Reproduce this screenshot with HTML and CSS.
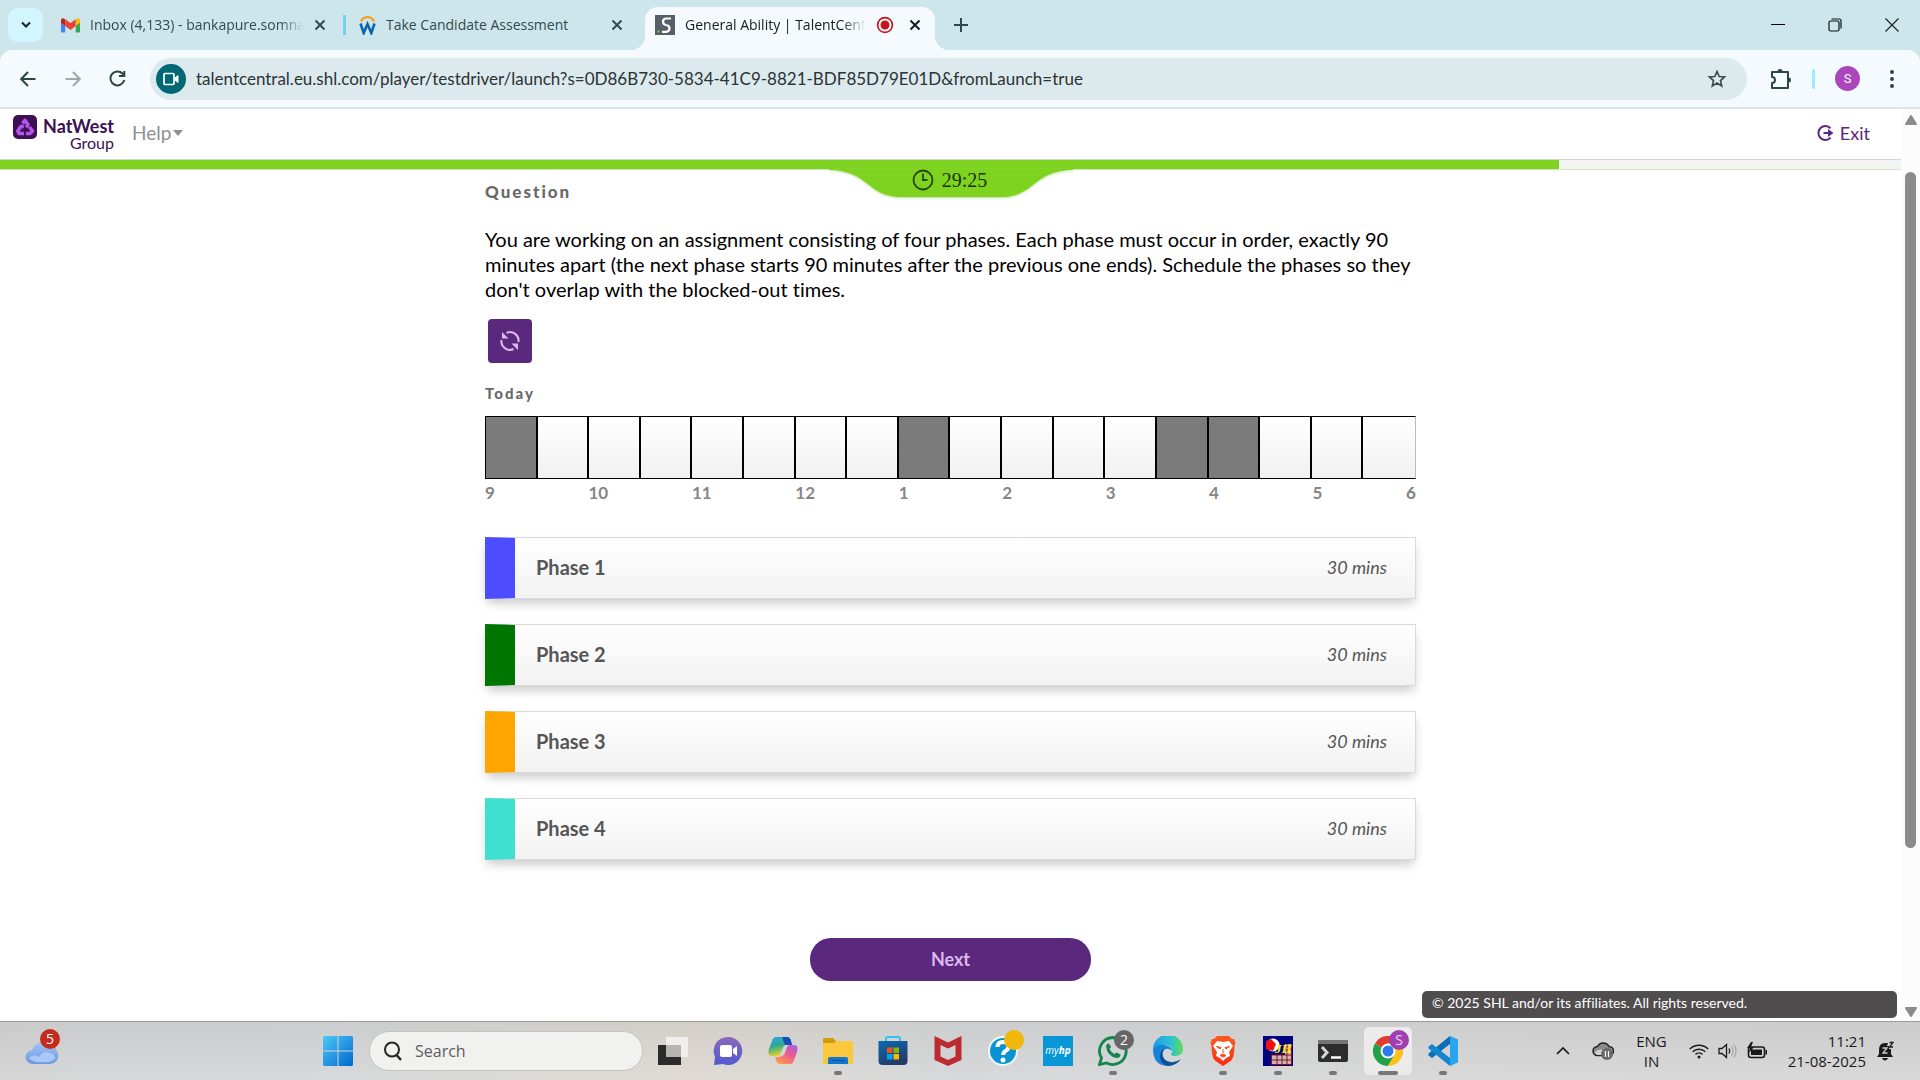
FILE: index.html
```html
<!DOCTYPE html>
<html lang="en">
<head>
<meta charset="utf-8">
<meta name="viewport" content="width=device-width, initial-scale=1">
<title>General Ability | TalentCentral</title>
<link rel="stylesheet" href="styles.css">
</head>
<body>
<div class="desktop">

  <header class="browser">
    <div class="tabstrip">
      <button class="tab-search" aria-label="Search tabs">
        <svg width="12" height="8" viewBox="0 0 12 8" fill="none" stroke="#1b1f20" stroke-width="2"><path d="M2 1.500L6 5.500L10 1.500"/></svg>
      </button>
      <div class="tab tab-mail">
        <svg width="19" height="15" viewBox="0 0 19 15"><path d="M0 2v11.500q0 1 1 1h3.300V6z" fill="#4285f4"/><path d="M19 2v11.500q0 1-1 1h-3.300V6z" fill="#34a853"/><path d="M14.700 1.200L17 .2q2 0 2 2v2.500l-4.300 3.300z" fill="#fbbc04"/><path d="M4.300 1.200L2 .2q-2 0-2 2v2.500l4.300 3.300z" fill="#c5221f"/><path d="M4.300 1.200L9.500 5l5.200-3.800V8L9.500 12 4.300 8z" fill="#ea4335"/></svg>
        <span class="tab-title">Inbox (4,133) - bankapure.somnath</span>
        <button class="tab-close" aria-label="Close tab"><svg width="12" height="12" viewBox="0 0 12 12" stroke="currentColor" stroke-width="2"><path d="M1.500 1.500l9 9M10.500 1.500l-9 9"/></svg></button>
      </div>
      <div class="tab tab-candidate">
        <svg width="17" height="20" viewBox="0 0 17 20" fill="none"><path d="M2 6.500a7 7 0 0 1 13 0" stroke="#f5a31b" stroke-width="2.200"/><path d="M1.500 8.500l3.200 9.500 3.800-9 3.800 9 3.200-9.500" stroke="#0d66ac" stroke-width="2.600"/></svg>
        <span class="tab-title">Take Candidate Assessment</span>
        <button class="tab-close" aria-label="Close tab"><svg width="12" height="12" viewBox="0 0 12 12" stroke="currentColor" stroke-width="2"><path d="M1.500 1.500l9 9M10.500 1.500l-9 9"/></svg></button>
      </div>
      <div class="tab tab-active">
        <svg width="20" height="20" viewBox="0 0 20 20"><path d="M0 0h20v20H0z" fill="#566068"/><path d="M16 3.500h-4.500q-3.500 0-3.500 3t3 3.500q3.500.5 3.500 3.500t-3.500 3.300H7" fill="none" stroke="#fff" stroke-width="2.200"/><path d="M2.500 15.500h2v2h-2z" fill="#7ed321"/></svg>
        <span class="tab-title">General Ability | TalentCentral</span>
        <svg width="18" height="18" viewBox="0 0 18 18"><circle cx="9" cy="9" r="7.400" fill="none" stroke="#c5161d" stroke-width="1.700"/><circle cx="9" cy="9" r="4.500" fill="#c5161d"/></svg>
        <button class="tab-close" aria-label="Close tab"><svg width="12" height="12" viewBox="0 0 12 12" stroke="currentColor" stroke-width="2"><path d="M1.500 1.500l9 9M10.500 1.500l-9 9"/></svg></button>
      </div>
      <button class="tab-new" aria-label="New tab"><svg width="14" height="14" viewBox="0 0 14 14" stroke="#33474a" stroke-width="2"><path d="M7 0v14M0 7h14"/></svg></button>
      <div class="window-controls">
        <button aria-label="Minimize"><svg width="14" height="14" viewBox="0 0 14 14" stroke="#000"><path d="M0 6.500h14"/></svg></button>
        <button aria-label="Restore"><svg width="14" height="14" viewBox="0 0 14 14" stroke="#111" fill="none" stroke-width="1.200"><rect x="1" y="3" width="10" height="10" rx="1.500"/><path d="M3.500 1h7.500q2 0 2 2v7.500"/></svg></button>
        <button aria-label="Close window"><svg width="14" height="14" viewBox="0 0 14 14" stroke="#222" stroke-width="1.200"><path d="M.5.5l13 13M13.500.5l-13 13"/></svg></button>
      </div>
    </div>

    <div class="toolbar">
      <nav class="nav-buttons">
        <button aria-label="Back"><svg width="16" height="16" viewBox="0 0 16 16" fill="none" stroke="#2f4548" stroke-width="2"><path d="M15.500 8H1.500M8 1L1.200 8 8 15"/></svg></button>
        <button aria-label="Forward"><svg width="16" height="16" viewBox="0 0 16 16" fill="none" stroke="#9caaad" stroke-width="2"><path d="M.5 8h14M8 1l6.800 7L8 15"/></svg></button>
        <button aria-label="Reload"><svg width="17" height="17" viewBox="0 0 17 17" fill="none" stroke="#2f4548" stroke-width="2"><path d="M15.300 10A7 7 0 1 1 13.500 3.500l1.500 1.500M15.300 1v5H10"/></svg></button>
      </nav>
      <form class="omnibox">
        <button type="button" class="site-info" aria-label="Camera in use"><svg width="16" height="14" viewBox="0 0 16 14" fill="none" stroke="#fff" stroke-width="1.700"><rect x="1" y="1.500" width="10" height="11" rx="1"/><path d="M12 6l3-2.500v7L12 8z" fill="#fff" stroke-width="1"/></svg></button>
        <input class="address" type="text" aria-label="Address" value="talentcentral.eu.shl.com/player/testdriver/launch?s=0D86B730-5834-41C9-8821-BDF85D79E01D&amp;fromLaunch=true">
        <button type="button" class="bookmark" aria-label="Bookmark this tab"><svg width="20" height="20" viewBox="0 0 20 20" fill="none" stroke="#3f4a4c" stroke-width="1.700"><path d="M10 2.500l2.200 5 5.400.5-4.100 3.600 1.200 5.300L10 14.100l-4.700 2.800 1.200-5.300L2.400 8l5.400-.5z"/></svg></button>
      </form>
      <button class="extensions" aria-label="Extensions"><svg width="22" height="22" viewBox="0 0 22 22" fill="none" stroke="#2f4548" stroke-width="2"><path d="M2 4h16v16H2v-5q3 0 3-3t-3-3z" stroke-linejoin="round"/><path d="M7.500 3.500a2.500 2.500 0 0 1 5 0zM18.500 9.500a2.500 2.500 0 0 1 0 5z" fill="#2f4548" stroke="none"/></svg></button>
      <span class="toolbar-divider"></span>
      <button class="profile" aria-label="Profile">S</button>
      <button class="menu" aria-label="Menu"><svg width="4" height="18" viewBox="0 0 4 18" fill="#2f4548"><circle cx="2" cy="2" r="2"/><circle cx="2" cy="9" r="2"/><circle cx="2" cy="16" r="2"/></svg></button>
    </div>
  </header>

  <div class="viewport">
    <div class="site">
      <div class="site-header">
        <a class="logo" href="#">
          <svg width="24" height="24" viewBox="0 0 24 24"><rect width="24" height="24" rx="5" fill="#3c1053"/><g fill="none" stroke="#b455ea" stroke-width="3.600" stroke-linejoin="round"><path d="M9.500 8.500L12 5.500l3 4-1.500 3"/><path d="M16.500 12l3 4-2.500 2.500h-4"/><path d="M11 18.500H6L4.800 16l3-4.500h3"/></g></svg>
          <span class="logo-text"><strong>NatWest</strong><span>Group</span></span>
        </a>
        <button class="help">Help <svg width="10" height="6" viewBox="0 0 10 6"><path d="M0 0h10L5 6z" fill="#8f8f8f"/></svg></button>
        <a class="exit" href="#">
          <svg width="18" height="18" viewBox="0 0 18 18" fill="none" stroke="#5a287d" stroke-width="2"><path d="M14.500 4.200A7 7 0 1 0 14.500 13.800M7.500 9h6"/><path d="M12 5l5.500 4L12 13z" fill="#5a287d" stroke="none"/></svg>
          Exit
        </a>
      </div>

      <div class="progress">
        <div class="progress-fill" style="width:82%"></div>
        <div class="timer">
          <svg class="timer-shape" width="244" height="30" viewBox="0 0 244 30"><path d="M0 0h244v1C204 1 206 28 172 28H72C38 28 40 1 0 1z" fill="#7ed321"/></svg>
          <div class="timer-value">
            <svg width="22" height="22" viewBox="0 0 22 22" fill="none" stroke="#28470c" stroke-width="1.800"><circle cx="11" cy="11" r="9.500"/><path d="M11 4.500V11h4.500"/></svg>
            <time>29:25</time>
          </div>
        </div>
      </div>

      <main class="question">
        <h1>Question</h1>
        <p class="prompt">You are working on an assignment consisting of four phases. Each phase must occur in order, exactly 90 minutes apart (the next phase starts 90 minutes after the previous one ends). Schedule the phases so they don't overlap with the blocked-out times.</p>
        <button class="reset" aria-label="Reset"><svg width="20" height="20" viewBox="0 0 20 20" fill="none" stroke="#dcb8f0" stroke-width="2"><path d="M6.500 2A8.500 8.500 0 0 1 18.500 11M13.500 18A8.500 8.500 0 0 1 1.500 9"/><path d="M2 1v6.500h6.500zM18 19v-6.500h-6.500z" fill="#dcb8f0" stroke="none"/></svg></button>
        <h2>Today</h2>
        <div class="timeline">
          <i class="blocked"></i><i></i><i></i><i></i><i></i><i></i><i></i><i></i><i class="blocked"></i><i></i><i></i><i></i><i></i><i class="blocked"></i><i class="blocked"></i><i></i><i></i><i></i>
        </div>
        <div class="hours"><span>9</span><span>10</span><span>11</span><span>12</span><span>1</span><span>2</span><span>3</span><span>4</span><span class="hour-last">5<b>6</b></span></div>

        <ul class="phases">
          <li class="phase phase-1"><strong>Phase 1</strong><em>30 mins</em></li>
          <li class="phase phase-2"><strong>Phase 2</strong><em>30 mins</em></li>
          <li class="phase phase-3"><strong>Phase 3</strong><em>30 mins</em></li>
          <li class="phase phase-4"><strong>Phase 4</strong><em>30 mins</em></li>
        </ul>
        <button class="next">Next</button>
      </main>
      <footer class="copyright">© 2025 SHL and/or its affiliates. All rights reserved.</footer>
    </div>

    <div class="scrollbar">
      <svg width="12" height="10" viewBox="0 0 12 10"><path d="M6 1l5 8H1z" fill="#8b8b8b" stroke="#8b8b8b" stroke-width="2" stroke-linejoin="round"/></svg>
      <div class="scroll-track"><div class="scroll-thumb"></div></div>
      <svg width="12" height="10" viewBox="0 0 12 10"><path d="M6 9L1 1h10z" fill="#8b8b8b" stroke="#8b8b8b" stroke-width="2" stroke-linejoin="round"/></svg>
    </div>
  </div>

  <footer class="taskbar">
    <button class="weather" aria-label="Weather">
      <svg width="36" height="30" viewBox="0 0 36 30"><defs><linearGradient id="cl" x2="0" y2="1"><stop stop-color="#9ec3f5"/><stop offset="1" stop-color="#6f98e3"/></linearGradient></defs><circle cx="23" cy="11" r="8" fill="#f58a1f"/><path d="M8 28a7 7 0 0 1-1-14 10 10 0 0 1 18-3 8.500 8.500 0 0 1 0 17z" fill="url(#cl)"/><path d="M4 22q5-5 10-1 4-7 11-4 5 1 5 5-3 5-12 4-10 1-14-4z" fill="#a9c8f7"/></svg>
      <span class="badge badge-red">5</span>
    </button>
    <div class="apps">
      <button class="start" aria-label="Start"><svg width="30" height="30" viewBox="0 0 30 30"><defs><linearGradient id="wn" x2="1" y2="1"><stop stop-color="#4dc9f5"/><stop offset="1" stop-color="#0067cf"/></linearGradient></defs><path d="M1 0h13.500v14.500H0V1zM15.500 0H29l1 1v13.500H15.500zM0 15.500h14.500V30H1l-1-1zM15.500 15.500H30V29l-1 1H15.500z" fill="url(#wn)"/></svg></button>
      <label class="search">
        <svg width="20" height="20" viewBox="0 0 20 20" fill="none" stroke="#262626" stroke-width="2"><circle cx="9" cy="8.500" r="7"/><path d="M13.500 14l4.500 5" stroke-width="2.500"/></svg>
        <input type="text" placeholder="Search" aria-label="Search">
      </label>
      <div class="app-list">
        <button class="app" aria-label="Task view"><svg width="30" height="30" viewBox="0 0 30 30"><path d="M0 9h23v20H0z" fill="#2b2b2b"/><path d="M8 1h22v20H8z" fill="#f4f4f4" opacity=".82"/><path d="M8 9h15v12H8z" fill="#b5b5b5"/></svg></button>
        <button class="app" aria-label="Chat"><svg width="30" height="30" viewBox="0 0 30 30"><defs><linearGradient id="ct" x2="0" y2="1"><stop stop-color="#8b68b8"/><stop offset="1" stop-color="#4f5bd0"/></linearGradient></defs><path d="M15 1a14 14 0 1 1-5 27L1 29l1-8A14 14 0 0 1 15 1z" fill="url(#ct)"/><rect x="7" y="9" width="12" height="12" rx="2" fill="#fff"/><path d="M20 13l4-3v10l-4-3z" fill="#fff"/></svg></button>
        <button class="app" aria-label="Copilot"><svg width="30" height="30" viewBox="0 0 30 30"><defs><linearGradient id="ca" x2=".3" y2="1"><stop stop-color="#2fa4f0"/><stop offset=".5" stop-color="#2bab8f"/><stop offset="1" stop-color="#e4d32c"/></linearGradient><linearGradient id="cb" x1="1" x2=".3" y2="1"><stop stop-color="#a45ef0"/><stop offset=".5" stop-color="#ec5a91"/><stop offset="1" stop-color="#ff9a4a"/></linearGradient></defs><path d="M8 1h11q3 0 4 4l1 4h-5q-3 0-4 3l-2 5q-1 3-4 3H4q-5 0-3-7L4 5q1-4 4-4z" fill="url(#ca)"/><path d="M14 1h5q3 0 4 4l1 4h-7z" fill="#1450b8"/><path d="M22 28H12q-3 0-4-4l-1-3h4q3 0 4-3l2-6q1-3 4-3h5q5 0 3 7l-3 8q-1 4-4 4z" fill="url(#cb)"/><path d="M17.500 9h1.500q-3 0-4 3l-2 6q-1 2-2.500 2H13q3 0 4-3l2-6q.6-1.700 2-2z" fill="#d3d5d6"/></svg></button>
        <button class="app running" aria-label="File Explorer"><svg width="30" height="30" viewBox="0 0 30 30"><path d="M1 2h9l3 3h17v10H0V3z" fill="#d39a0c"/><path d="M0 7h11l2-2h17v23H0z" fill="#fac83c"/><path d="M5 28v-5q0-2 2-2h16q2 0 2 2v5z" fill="#1276d0"/><path d="M9 24.500h12" stroke="#0a4d96"/></svg></button>
        <button class="app" aria-label="Microsoft Store"><svg width="30" height="30" viewBox="0 0 30 30"><defs><linearGradient id="st" x2=".5" y2="1"><stop stop-color="#086bb5"/><stop offset="1" stop-color="#253b66"/></linearGradient></defs><path d="M8 6V2.500Q8 1 9.500 1h11Q22 1 22 2.500V6" fill="none" stroke="#35c1ef" stroke-width="2"/><path d="M.5 5h29v20q0 4-4 4h-21q-4 0-4-4z" fill="url(#st)"/><path d="M9 11.500h5.500V17H9z" fill="#f25022"/><path d="M15.500 11.500H21V17h-5.500z" fill="#7fba00"/><path d="M9 18h5.500v5.500H9z" fill="#00a4ef"/><path d="M15.500 18H21v5.500h-5.500z" fill="#ffb900"/></svg></button>
        <button class="app" aria-label="McAfee"><svg width="30" height="30" viewBox="0 0 30 30"><path d="M1.500 0L15 6.500 28.500 0v24L15 30 1.500 24z" fill="#bd2a2f"/><path d="M7.500 9L15 12.500 22.500 9v11.500L15 24l-7.500-3.500z" fill="#d0d2d3"/></svg></button>
        <button class="app" aria-label="Get Help"><svg width="30" height="30" viewBox="0 0 30 30"><circle cx="15" cy="15" r="14" fill="#0a93d1" stroke="#f1f7fa" stroke-width="2"/><path d="M9.500 11q0-5 5.500-5t5.500 4.500q0 3-3 4.500-2.300 1.200-2.300 4" fill="none" stroke="#fff" stroke-width="4"/><circle cx="15" cy="24" r="2.500" fill="#fff"/></svg><span class="badge badge-yellow"></span></button>
        <button class="app" aria-label="myHP"><span class="hp-tile">my<b>hp</b></span></button>
        <button class="app running" aria-label="WhatsApp"><svg width="30" height="30" viewBox="0 0 30 30"><path d="M15 1.500A13.500 13.500 0 1 1 8.500 27L1.500 28.500 3.500 22A13.500 13.500 0 0 1 15 1.500z" fill="none" stroke="#12864c" stroke-width="2.800"/><path d="M8 10q1-3 3-2.500l2 3.500-1.500 2q2 4 5 5l2-1.500 4 2q0 3.500-4 3.500Q9 20 8 10z" fill="#12864c"/></svg><span class="badge badge-gray">2</span></button>
        <button class="app" aria-label="Edge"><svg width="30" height="30" viewBox="0 0 30 30"><defs><linearGradient id="eg"><stop stop-color="#1d9be8"/><stop offset=".6" stop-color="#2bc3d2"/><stop offset="1" stop-color="#62dc52"/></linearGradient></defs><path d="M0 14A15 15 0 0 1 30 13q0 7-8 7-4 0-4-2 2-2 1-4-2-5-8-5Q3 9 0 14z" fill="url(#eg)"/><path d="M0 14q3-6 11-5 7 1 8 6-4-4-8-1-3 3-1 8 3 6 8 7.500Q1 32 0 14z" fill="#1583d6"/><path d="M11 13q-4 8 3 12 7 3 14-2Q23 30 15 30 7 28 7 20q0-5 4-7z" fill="#0d4f9c"/></svg></button>
        <button class="app running" aria-label="Brave"><svg width="30" height="30" viewBox="0 0 30 30"><defs><linearGradient id="br" x2="0" y2="1"><stop stop-color="#ff5a1c"/><stop offset="1" stop-color="#fb2b12"/></linearGradient></defs><path d="M9 0h12l3 3h2l1.500 4-1 3q0 12-4 15L15 30l-7.500-5q-4-3-4-15l-1-3L4 3h2z" fill="url(#br)"/><path d="M9 5l6 1 6-1 4 5-4 6 1 4-4 2-3 3-3-3-4-2 1-4-4-6z" fill="#fff"/><path d="M8.500 10.500l4.500 1-1 1.500zM21.500 10.500l-4.500 1 1 1.500zM15 13v4M12 19.500l3-1.500 3 1.500-3 1.500z" fill="#fb4a1c" stroke="#fb4a1c"/></svg></button>
        <button class="app running" aria-label="JH"><span class="jh-tile"><svg width="30" height="30" viewBox="0 0 30 30"><path d="M0 0h30v30H0z" fill="#000080"/><path d="M8 19h21v10H8zM22 8h7v11h-7z" fill="#c9b5b5"/><path d="M8.500 19v10M14 19v10M19 19v10M24 8v21M8 24h21M8 28.500h21M22 13h7M8 19h21M28.500 8v21" stroke="#8a1016"/><circle cx="10" cy="9" r="6.500" fill="#fff"/><path d="M3 5l5-2 5 5-3 7-7-2z" fill="#ee1018"/></svg><b>JH</b></span></button>
        <button class="app running" aria-label="Terminal"><svg width="30" height="30" viewBox="0 0 30 30"><rect y="4" width="30" height="22" rx="2" fill="#2d2d2d"/><path d="M0 8V6q0-2 2-2h26q2 0 2 2v2z" fill="#757575"/><path d="M4 11l5 5.500L4 22" fill="none" stroke="#d5d5d5" stroke-width="3"/><path d="M13 21.500h10" stroke="#fff" stroke-width="2.500"/></svg></button>
        <button class="app running focused" aria-label="Chrome"><svg width="30" height="30" viewBox="0 0 30 30"><path d="M15 15L2 7.500A15 15 0 0 1 28 7.500H15z" fill="#e33b2e"/><path d="M15 15L2 7.500A15 15 0 0 0 15 30l6.500-11z" fill="#23a047"/><path d="M15 7.500h13A15 15 0 0 1 15 30l6.500-11.300z" fill="#fcc21b"/><circle cx="15" cy="15" r="7.500" fill="#fff"/><circle cx="15" cy="15" r="5.500" fill="#2b7cea"/></svg><span class="badge badge-purple">S</span></button>
        <button class="app running" aria-label="Visual Studio Code"><svg width="30" height="30" viewBox="0 0 30 30"><path d="M22 0v8L4 22 .5 19.500v-2z" fill="#0a6fb5"/><path d="M22 30v-8L4 8 .5 10.500v2z" fill="#1486cf"/><path d="M22 0l8 3.500v23L22 30z" fill="#27a5ee"/></svg></button>
      </div>
    </div>
    <div class="tray">
      <button aria-label="Show hidden icons"><svg width="14" height="8" viewBox="0 0 14 8" fill="none" stroke="#1a1a1a" stroke-width="1.700"><path d="M1 7l6-6 6 6"/></svg></button>
      <button aria-label="OneDrive paused"><svg width="22" height="20" viewBox="0 0 22 20"><path d="M5.500 14.500a4.500 4.500 0 0 1 0-9 6.500 6.500 0 0 1 11.500 0 4.500 4.500 0 0 1 0 9z" fill="#8b8b8b" stroke="#222" stroke-width="1.500"/><path d="M2.500 11.500q4-4 8.500-2.500 5 0 8 2l-2 3H5z" fill="#d0d0d0"/><circle cx="15" cy="13" r="6" fill="#6a6a6a"/><path d="M13.500 10v6M16.500 10v6" stroke="#fff" stroke-width="1.200"/></svg></button>
      <button class="lang">ENG<br>IN</button>
      <button class="quick" aria-label="Network, volume, battery">
        <svg width="20" height="16" viewBox="0 0 20 16" fill="none" stroke="#1a1a1a" stroke-width="1.500"><path d="M.8 6a13 13 0 0 1 18.400 0M3.700 8.800a9 9 0 0 1 12.600 0M6.500 11.500a5 5 0 0 1 7 0"/><circle cx="10" cy="14" r="1.500" fill="#1a1a1a" stroke="none"/></svg>
        <svg width="20" height="16" viewBox="0 0 20 16" fill="none" stroke="#1a1a1a" stroke-width="1.300"><path d="M1 5.500h3L8.500 1.500v13L4 10.500H1z"/><path d="M11 5.500q1.500 2.500 0 5"/><path d="M13.500 3.500q3 4.500 0 9M16 1.500q4 6.500 0 13" stroke="#a5a5a5"/></svg>
        <svg width="20" height="18" viewBox="0 0 20 18"><rect x="1.500" y="5" width="16" height="10.500" rx="2.500" fill="none" stroke="#1a1a1a" stroke-width="1.600"/><rect x="4" y="7.500" width="11" height="5.500" fill="#1a1a1a"/><path d="M18.500 8v4.500h1.500V8z" fill="#1a1a1a"/><path d="M4 0L0 6h3l-1 5 5-6H4l2-5z" fill="#1a1a1a"/></svg>
      </button>
      <button class="clock">11:21<br>21-08-2025</button>
      <button aria-label="Notifications snoozed"><svg width="18" height="20" viewBox="0 0 18 20"><path d="M2 9q0-7 6-7h3l-1 3 2 0 0 3h2v5l2 3H0l2-3z" fill="#1a1a1a"/><path d="M5 17h6q-1 2.500-3 2.500T5 17z" fill="#1a1a1a"/><path d="M5.500 7H10l-4 5h4.500" fill="none" stroke="#ccc" stroke-width="1.300"/><path d="M12.500 1.500H16l-3.500 4.500H16" fill="none" stroke="#1a1a1a" stroke-width="1.300"/></svg></button>
    </div>
  </footer>
</div>
</body>
</html>
```
FILE: styles.css
```css
* { box-sizing: border-box; }

body {
  margin: 0;
  font-family: Lato, "Open Sans", sans-serif;
  font-variant-ligatures: none;
  color: #000;
  background: #fff;
}

button {
  border: 0;
  padding: 0;
  background: none;
  font: inherit;
  color: inherit;
  display: flex;
  align-items: center;
  justify-content: center;
}

input {
  border: 0;
  padding: 0;
  background: none;
  font: inherit;
  min-width: 0;
}

a { color: inherit; text-decoration: none; }
svg { flex: none; display: block; }

.desktop {
  min-height: 100vh;
  display: flex;
  flex-direction: column;
}

/* Browser tabs */
.browser { background: #cde6eb; }

.tabstrip {
  display: flex;
  align-items: center;
  height: 50px;
  padding-left: 8px;
  font: 14px/20px "Open Sans", sans-serif;
  color: #334a4e;
}

.tab-search {
  width: 35px;
  height: 34px;
  border-radius: 10px;
  background: #d1f6ff;
}

.tab {
  display: flex;
  align-items: center;
  gap: 10px;
  padding: 0 18px;
}

.tab-mail {
  width: 303px;
  height: 20px;
  border-right: 3px solid #74d3e6;
  padding-right: 17px;
}

.tab-candidate { width: 299px; padding: 0 22px 0 13px; }

.tab-title {
  flex: 1;
  overflow: hidden;
  white-space: nowrap;
}

.tab-mail .tab-title,
.tab-active .tab-title {
  mask-image: linear-gradient(to left, transparent, #000 24px);
}

.tab-active {
  position: relative;
  align-self: flex-end;
  width: 290px;
  height: 43px;
  padding: 0 14px 8px 10px;
  border-radius: 13px 13px 0 0;
  background: #f4fafd;
  color: #171c1d;
}

.tab-active .tab-close { margin-left: 5px; }

.tab-active::before,
.tab-active::after {
  content: "";
  position: absolute;
  bottom: 0;
  width: 14px;
  height: 14px;
}

.tab-active::before {
  right: 100%;
  background: radial-gradient(circle at 0 0, transparent 14px, #f4fafd 14px);
}

.tab-active::after {
  left: 100%;
  background: radial-gradient(circle at 100% 0, transparent 14px, #f4fafd 14px);
}

.tab-new { width: 52px; height: 34px; }

.window-controls { display: flex; margin-left: auto; }
.window-controls button { width: 57px; height: 48px; }

/* Address row */
.toolbar {
  display: flex;
  align-items: center;
  height: 59px;
  padding: 0 21px 0 5px;
  border-bottom: 2px solid #d9e5e8;
  border-radius: 12px 12px 0 0;
  background: #f4fafd;
}

.nav-buttons { display: flex; }
.nav-buttons button { width: 45px; height: 40px; }

.omnibox {
  flex: 1;
  display: flex;
  align-items: center;
  height: 42px;
  margin: 0 23px 0 10px;
  padding: 0 20px 0 6px;
  border-radius: 21px;
  background: #dceaee;
}

.site-info {
  width: 30px;
  height: 30px;
  border-radius: 50%;
  background: #006874;
}

.address {
  flex: 1;
  margin: 0 10px;
  font-size: 17px;
  line-height: 24px;
  color: #2b3335;
}

.toolbar-divider {
  width: 3px;
  height: 20px;
  margin: 0 20px;
  border-radius: 2px;
  background: #9beeff;
}

.profile {
  width: 25px;
  height: 25px;
  border-radius: 50%;
  background: #ab47bc;
  color: #fff;
  font: 13px/25px Roboto, sans-serif;
}

.menu { width: 14px; height: 30px; margin-left: 25px; }

/* Page area */
.viewport { flex: 1; display: flex; }

.site {
  flex: 1;
  position: relative;
  display: flex;
  flex-direction: column;
}

.site-header {
  display: flex;
  align-items: center;
  height: 51px;
  padding: 0 31px 2px 13px;
  border-bottom: 1px solid #d5d5d5;
}

.logo {
  display: flex;
  align-items: flex-start;
  gap: 6px;
  color: #3c1053;
}

.logo-text {
  display: flex;
  flex-direction: column;
  align-items: flex-end;
  padding-top: 2px;
  font: 16px/16px Lato, sans-serif;
}

.logo-text strong { font: bold 18px/18px Lato, sans-serif; }

.help {
  gap: 2px;
  margin-left: 18px;
  font-size: 19px;
  line-height: 24px;
  color: #8f8f8f;
}

.exit {
  display: flex;
  align-items: center;
  gap: 6px;
  margin-left: auto;
  font-size: 18px;
  line-height: 24px;
  color: #5a287d;
}

.progress {
  position: relative;
  height: 10px;
  border-bottom: 1px solid #cfe8b5;
  background: #f4f4f4;
}

.progress-fill { height: 9px; background: #7ed321; }

/* The timer hangs below the progress bar, over the question */
.timer {
  position: absolute;
  top: 9px;
  left: 50%;
  width: 244px;
  margin-left: -122px;
}

.timer-shape { filter: drop-shadow(0 1px 1px #b7dd8c); }

.timer-value {
  position: absolute;
  inset: 0 2px 8px 0;
  display: flex;
  align-items: center;
  justify-content: center;
  gap: 8px;
  font: 20px/22px "Liberation Serif", serif;
  color: #1c3306;
}

.question {
  width: 100%;
  max-width: 931px;
  margin: 0 auto;
  padding: 10px 0 40px;
}

h1, h2 {
  margin: 0;
  font-weight: 900;
  letter-spacing: 2px;
  color: #6a6a6a;
}

h1 { font-size: 17px; line-height: 24px; }
h2 { font-size: 15px; line-height: 20px; }

.prompt {
  margin: 23px 0 17px;
  font-size: 20px;
  line-height: 25px;
}

.reset {
  width: 44px;
  height: 44px;
  margin: 0 0 20px 3px;
  border-radius: 4px;
  background: #5a287d;
}

.timeline {
  display: grid;
  grid-template-columns: repeat(18, 1fr);
  height: 63px;
  margin-top: 13px;
  border: 1px solid #000;
  border-right: 1px solid #bbb;
  background: linear-gradient(#fff, #f1f1f1);
}

.timeline i { border-right: 2px solid #000; }
.timeline i:last-child { border-right: 0; }
.timeline .blocked { background: #7b7b7b; }

.hours {
  display: grid;
  grid-template-columns: repeat(9, 1fr);
  margin-top: 2px;
  font-size: 17px;
  line-height: 24px;
  font-weight: bold;
  color: #868686;
}

.hour-last { display: flex; justify-content: space-between; }

.phases {
  display: flex;
  flex-direction: column;
  gap: 25px;
  margin: 32px 0 0;
  padding: 0;
  list-style: none;
}

.phase {
  display: flex;
  align-items: center;
  justify-content: space-between;
  height: 62px;
  padding: 0 28px 3px 21px;
  border: 1px solid #dadada;
  border-left: 30px solid;
  background: linear-gradient(#fff, #f2f2f2);
  box-shadow: 0 6px 10px -2px rgba(0, 0, 0, .22);
  color: #555;
}

.phase strong { font-size: 20px; line-height: 24px; }
.phase em { font-size: 18px; line-height: 24px; }
.phase-1 { border-left-color: #4d4dff; }
.phase-2 { border-left-color: #007500; }
.phase-3 { border-left-color: #ffa500; }
.phase-4 { border-left-color: #40e0d0; }

.next {
  width: 281px;
  height: 43px;
  margin: 78px auto 0;
  padding-bottom: 2px;
  border-radius: 21px;
  background: #5a287d;
  color: #dcb8f0;
  font-size: 18px;
  font-weight: bold;
}

.copyright {
  position: absolute;
  right: 4px;
  bottom: 3px;
  width: 475px;
  padding: 2px 10px 5px;
  border-radius: 5px;
  background: #4f4d4e;
  color: #fff;
  font-size: 14px;
  line-height: 20px;
}

.scrollbar {
  width: 19px;
  display: flex;
  flex-direction: column;
  align-items: center;
  padding: 6px 0 4px;
  background: #fcfcfc;
}

.scroll-track { flex: 1; padding: 47px 0 0; }

.scroll-thumb {
  width: 11px;
  height: 81%;
  border-radius: 6px;
  background: #8b8b8b;
}

/* Taskbar */
.taskbar {
  display: flex;
  align-items: center;
  height: 60px;
  padding: 0 25px 2px;
  border-top: 1px solid #9b9b9b;
  background: linear-gradient(rgba(200, 200, 200, .5), rgba(225, 225, 225, .5)), linear-gradient(90deg, #cdcdcd, #ccd3d8 15%, #d4d4ce 25%, #dfd7c8 36%, #cdd2d5 50%, #d2d2d2 75%, #d0d0d0);
  font: 15px/20px "Open Sans", sans-serif;
  color: #1a1a1a;
}

.weather { position: relative; }

.badge {
  position: absolute;
  width: 20px;
  height: 20px;
  border-radius: 50%;
  font-size: 14px;
  line-height: 20px;
  text-align: center;
  color: #fff;
}

.badge-red { background: #c42b1c; }
.weather .badge { top: -7px; right: 1px; }
.badge-yellow { background: #f2b70c; }
.badge-gray { background: #666; }
.badge-purple { background: #a03fb0; color: #eed5f3; }

.apps { display: flex; align-items: center; margin-left: 262px; }

.search {
  display: flex;
  align-items: center;
  gap: 12px;
  width: 274px;
  height: 40px;
  margin: 0 6px 0 16px;
  padding: 0 13px;
  border: 1px solid #c3c3c1;
  border-radius: 20px;
  background: #f1f1ef;
}

.search input { flex: 1; font-size: 16px; line-height: 24px; }
.search input::placeholder { color: #5c5c5c; opacity: 1; }

.app-list { display: flex; gap: 7px; }

.app {
  position: relative;
  width: 48px;
  height: 48px;
  border-radius: 5px;
}

.app .badge { right: 3px; top: 3px; }
.focused { background: #ebebeb; }

.running::after {
  content: "";
  position: absolute;
  bottom: 0;
  left: 20px;
  width: 8px;
  height: 4px;
  border-radius: 2px;
  background: #777;
}

.focused::after { left: 14px; width: 20px; }

.hp-tile {
  width: 30px;
  height: 30px;
  background: #0896d6;
  color: #fff;
  font: italic 10px/29px "Open Sans", sans-serif;
}

.jh-tile { position: relative; }

.jh-tile b {
  position: absolute;
  top: 5px;
  left: 12px;
  font: italic bold 13px/16px "Liberation Serif", serif;
  color: #ffee00;
}

.tray { display: flex; align-items: center; margin-left: auto; }
.tray > button { margin-left: 22px; }
.tray .lang { display: block; margin-left: 22px; text-align: center; }
.tray .quick { gap: 9px; margin-left: 22px; }
.tray .clock { display: block; margin-left: 21px; text-align: right; }
.tray > button:last-child { margin-left: 11px; }
```
